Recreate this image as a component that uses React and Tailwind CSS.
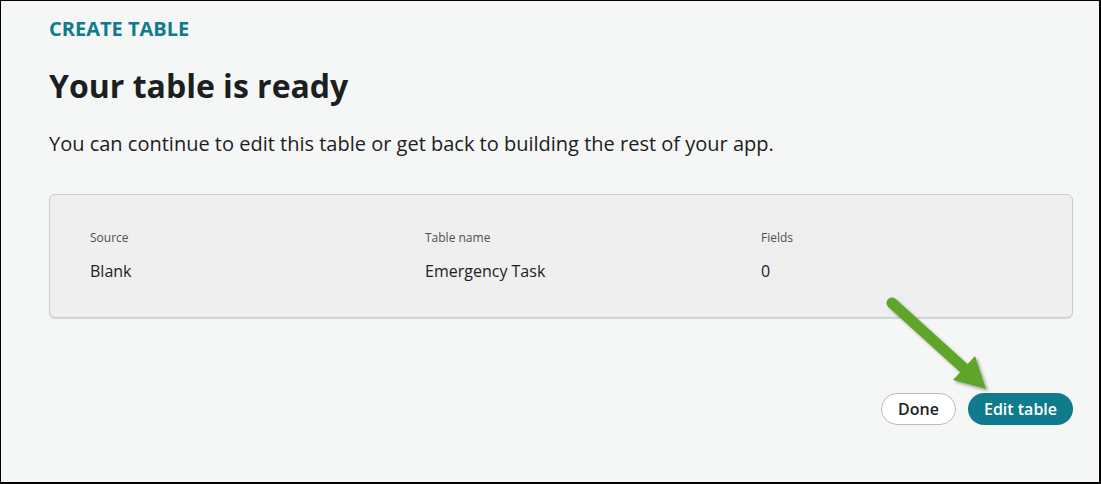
import React from 'react';

const font = { fontFamily: '"Open Sans", "Noto Sans", sans-serif' };

const columns = [
  { label: 'Source', value: 'Blank' },
  { label: 'Table name', value: 'Emergency Task' },
  { label: 'Fields', value: '0' }
];

const Arrow = () => (
  <svg className="absolute left-0 top-0 pointer-events-none" width="1101" height="484">
    <defs>
      <filter id="shadow" x="-20%" y="-20%" width="140%" height="140%">
        <feDropShadow dx="2" dy="2" stdDeviation="1.5" floodColor="#000" floodOpacity="0.35" />
      </filter>
    </defs>
    <g filter="url(#shadow)">
      <line x1="891" y1="302" x2="966" y2="370" stroke="#5ea52b" strokeWidth="11" strokeLinecap="round" />
      <polygon points="974,355 952,379 985,388" fill="#5ea52b" />
    </g>
  </svg>
);

const App = () => {
  return (
    <div
      className="relative w-[1101px] h-[484px] border-l border-t border-r-2 border-b-2 border-black bg-[#f5f7f7] pl-[48px] pr-[26px] pt-[16px] text-[#1d2022]"
      style={font}
    >
      {/* Header */}
      <div className="text-[20px] font-bold text-[#0f7b8c] leading-[24px]">CREATE TABLE</div>
      <h1 className="mt-[25px] text-[32px] font-bold leading-[40px] text-[#1b1f21]">Your table is ready</h1>
      <p className="mt-[24px] text-[20px] leading-[28px]">
        You can continue to edit this table or get back to building the rest of your app.
      </p>

      {/* Summary card */}
      <div className="mt-[36px] h-[124px] rounded-[6px] border border-[#c9cbcc] bg-[#efefef] shadow-[0_1px_1px_rgba(0,0,0,0.12)] pl-[40px] pt-[34px]">
        <div className="grid grid-cols-[335px_336px_1fr]">
          {columns.map((col) => (
            <div key={col.label}>
              <div className="text-[12px] leading-[18px] text-[#4a4f52]">{col.label}</div>
              <div className="mt-[14px] text-[16px] leading-[20px] text-[#1d2022]">{col.value}</div>
            </div>
          ))}
        </div>
      </div>

      {/* Actions */}
      <div className="mt-[75px] flex justify-end gap-[12px]">
        <button className="h-[32px] w-[75px] rounded-full border border-[#b9bcbd] bg-white text-[16px] font-semibold text-[#1d2022]">
          Done
        </button>
        <button className="h-[32px] w-[105px] rounded-full bg-[#0f7b8c] text-[16px] font-semibold text-white">
          Edit table
        </button>
      </div>

      <Arrow />
    </div>
  );
};

export default App;
